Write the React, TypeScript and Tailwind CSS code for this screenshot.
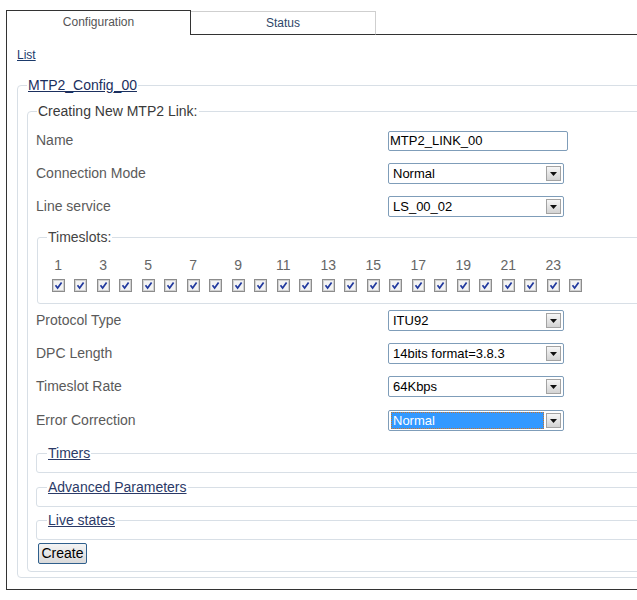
import type { ReactNode } from "react";

const slots = Array.from({ length: 24 }, (_, i) => i + 1);

function Checkbox() {
  return (
    <svg width="13" height="13" viewBox="0 0 13 13">
      <rect x="0.5" y="0.5" width="12" height="12" fill="#e2e2e2" stroke="#8c8c8c" />
      <rect x="1.5" y="1.5" width="10" height="10" fill="#f3f3f3" stroke="#d0d0d0" />
      <path d="M3.5 6.3 L5.6 9 L9.6 3.4" fill="none" stroke="#22399e" strokeWidth="1.7" />
    </svg>
  );
}

function Select({ value, focused = false }: { value: string; focused?: boolean }) {
  return (
    <div className="relative h-[21px] w-[176px] rounded-[2px] border border-[#7f9db9] bg-white text-[13px] leading-[19px] text-black">
      {focused ? (
        <div className="absolute top-[1px] bottom-[1px] left-[2px] right-[19px] border border-dotted border-[#c9742a] bg-[#3399ff] pl-[1px] leading-[15px] text-white">
          {value}
        </div>
      ) : (
        <div className="pl-[4px]">{value}</div>
      )}
      <span className="absolute top-[2px] right-[2px] flex h-[15px] w-[15px] items-center justify-center border border-[#a3a3a3] bg-gradient-to-b from-[#f7f7f7] to-[#d3d3d3]">
        <svg width="7" height="4" viewBox="0 0 7 4">
          <path d="M0 0 L7 0 L3.5 4 Z" fill="#111" />
        </svg>
      </span>
    </div>
  );
}

function Row({ label, children, className = "" }: { label: string; children: ReactNode; className?: string }) {
  return (
    <div className={`flex h-[33px] items-center ${className}`}>
      <div className="w-[352px] text-[14px] text-[#5a5a5a]">{label}</div>
      {children}
    </div>
  );
}

function Collapsed({ title, className }: { title: string; className: string }) {
  return (
    <fieldset className={`w-[700px] rounded-[3px] border border-[#d8dfe6] ${className}`}>
      <legend className="ml-[10px] px-px text-[14px] leading-[16px] text-[#2b3a67] underline">{title}</legend>
      <div className="h-[11px]" />
    </fieldset>
  );
}

export default function App() {
  return (
    <div className="h-[600px] w-[637px] overflow-hidden bg-white font-['Liberation_Sans',Arial,sans-serif]">
      <div className="flex items-end pt-[10px] pl-[6px]">
        <div className="flex h-[25px] w-[185px] items-center justify-center border border-b-0 border-[#333] pb-[2px] text-[12px] text-[#555]">
          Configuration
        </div>
        <div className="flex h-[24px] w-[185px] items-center justify-center border-t border-r border-b border-t-[#cfcfcf] border-r-[#cfcfcf] border-b-[#333] text-[12px] text-[#2e4668]">
          Status
        </div>
        <div className="h-[24px] flex-1 border-b border-[#333]" />
      </div>

      <div className="ml-[6px] border-b border-l border-[#333] pt-[13px] pb-[11px] pl-[10px]">
        <a className="block text-[12px] leading-[14px] text-[#1b3a6b] underline">List</a>

        <fieldset className="mt-[15px] w-[700px] rounded-[4px] border border-[#d8dfe6] pb-[5px]">
          <legend className="ml-[9px] px-px text-[14px] leading-[16px] text-[#1b2f5e] underline">MTP2_Config_00</legend>
          <div className="pt-[10px] pl-[9px]">
            <fieldset className="w-[700px] rounded-[4px] border border-[#d8dfe6] pb-[7px]">
              <legend className="ml-[9px] px-px text-[14px] leading-[16px] text-[#3a3a3a]">Creating New MTP2 Link:</legend>
              <div className="pt-[5px] pl-[8px]">
                <Row label="Name">
                  <div className="h-[20px] w-[180px] rounded-[2px] border border-[#7f9db9] pl-[1px] text-[13px] leading-[18px] text-black">
                    MTP2_LINK_00
                  </div>
                </Row>
                <Row label="Connection Mode">
                  <Select value="Normal" />
                </Row>
                <Row label="Line service">
                  <Select value="LS_00_02" />
                </Row>

                <fieldset className="mt-[6px] ml-px w-[700px] rounded-[3px] border border-[#d8dfe6] pb-[11px]">
                  <legend className="ml-[9px] px-px text-[14px] leading-[16px] text-[#444]">Timeslots:</legend>
                  <div className="pt-[10px] pl-[9px]">
                    <div className="grid h-[20px] grid-cols-[repeat(24,22.5px)] items-center text-[14px] text-[#666]">
                      {slots.map((n) => (
                        <div key={n} className="text-center">
                          {n % 2 === 1 ? n : ""}
                        </div>
                      ))}
                    </div>
                    <div className="mt-[4px] grid grid-cols-[repeat(24,22.5px)]">
                      {slots.map((n) => (
                        <div key={n} className="flex h-[13px] justify-center">
                          <Checkbox />
                        </div>
                      ))}
                    </div>
                  </div>
                </fieldset>

                <Row label="Protocol Type">
                  <Select value="ITU92" />
                </Row>
                <Row label="DPC Length">
                  <Select value="14bits format=3.8.3" />
                </Row>
                <Row label="Timeslot Rate">
                  <Select value="64Kbps" />
                </Row>
                <Row label="Error Correction" className="mt-[1px]">
                  <Select value="Normal" focused />
                </Row>

                <Collapsed title="Timers" className="mt-[8px]" />
                <Collapsed title="Advanced Parameters" className="mt-[6px]" />
                <Collapsed title="Live states" className="mt-[5px]" />

                <button className="mt-[3px] ml-[2px] block h-[21px] w-[49px] rounded-[2px] border border-[#2f5f8c] bg-gradient-to-b from-[#f4f4f4] to-[#dadada] text-[14px] leading-[19px] text-black">
                  Create
                </button>
              </div>
            </fieldset>
          </div>
        </fieldset>
      </div>
    </div>
  );
}
